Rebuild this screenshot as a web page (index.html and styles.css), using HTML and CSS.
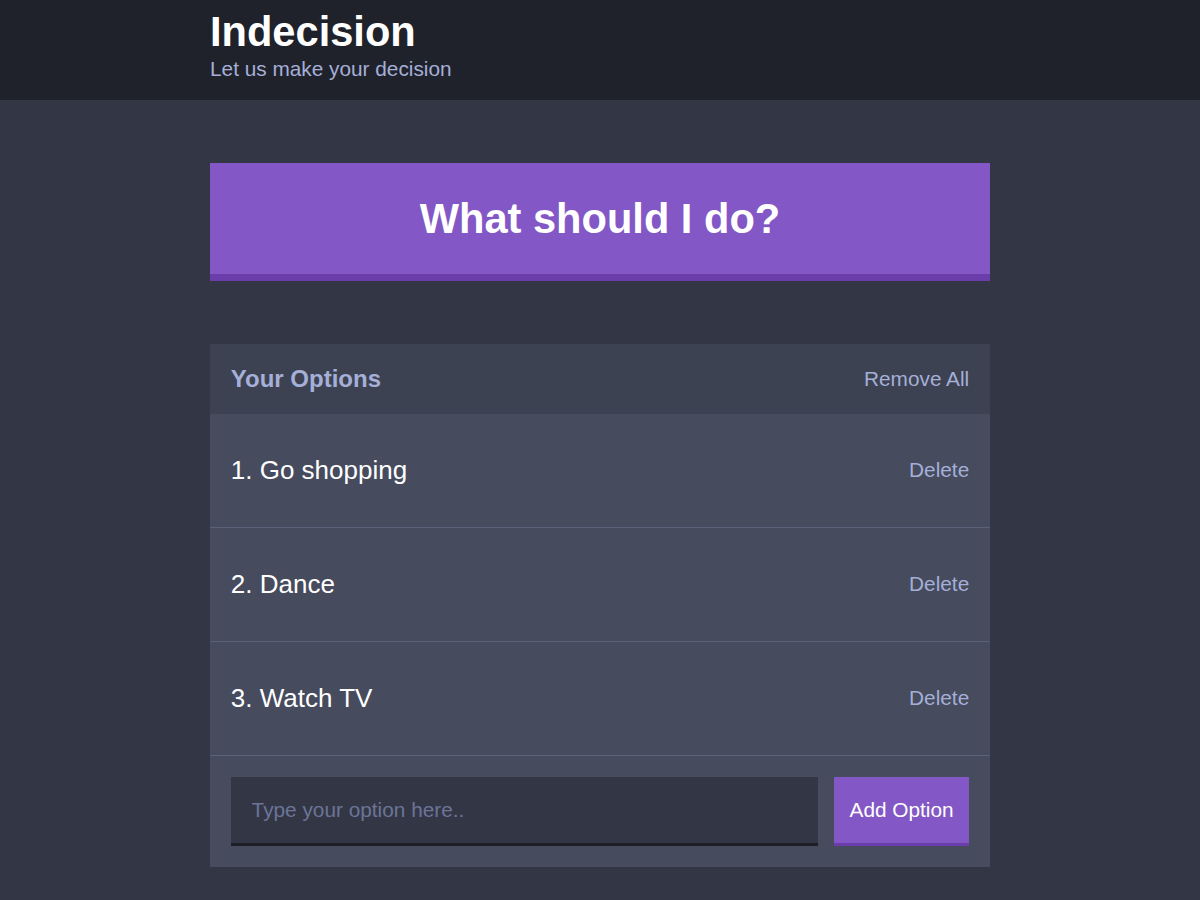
FILE: index.html
```html
<!DOCTYPE html>
<html lang="en">
<head>
<meta charset="utf-8">
<title>Indecision</title>
<link rel="stylesheet" href="styles.css">
</head>
<body>
<header class="header">
  <div class="container">
    <h1 class="header__title">Indecision</h1>
    <h2 class="header__subtitle">Let us make your decision</h2>
  </div>
</header>
<main class="container main">
  <button class="big-button">What should I do?</button>
  <section class="widget">
    <div class="widget-header">
      <h3 class="widget-header__title">Your Options</h3>
      <button class="button--link">Remove All</button>
    </div>
    <div class="option">
      <p class="option__text">1. Go shopping</p>
      <button class="button--link">Delete</button>
    </div>
    <div class="option">
      <p class="option__text">2. Dance</p>
      <button class="button--link">Delete</button>
    </div>
    <div class="option">
      <p class="option__text">3. Watch TV</p>
      <button class="button--link">Delete</button>
    </div>
    <form class="add-option">
      <input class="add-option__input" type="text" placeholder="Type your option here..">
      <button class="button" type="button">Add Option</button>
    </form>
  </section>
</main>
</body>
</html>
```

FILE: styles.css
```css
* { box-sizing: border-box; }

html, body {
  margin: 0;
  padding: 0;
}

body {
  background: #333745;
  font-family: "Liberation Sans", Arial, Helvetica, sans-serif;
  color: #ffffff;
  min-height: 900px;
}

.container {
  width: 780px;
  margin: 0 auto;
}

.header {
  background: #20222b;
  height: 100px;
  padding-top: 9px;
}

.header__title {
  margin: 0;
  font-size: 41.6px;
  line-height: 46px;
  font-weight: 700;
  color: #ffffff;
}

.header__subtitle {
  margin: 2px 0 0;
  font-size: 20.8px;
  line-height: 24px;
  font-weight: 400;
  color: #a5afd7;
}

.main {
  padding-top: 63.4px;
}

.big-button {
  display: block;
  width: 100%;
  background: #8357c5;
  border: none;
  border-bottom: 7.8px solid #6a3dab;
  color: #ffffff;
  font-family: inherit;
  font-size: 41.6px;
  font-weight: 700;
  line-height: 48.5px;
  padding: 31.2px 0;
  margin: 0 0 62.6px;
  cursor: pointer;
}

.widget {
  background: #464b5e;
}

.widget-header {
  background: #3c4251;
  height: 70px;
  padding: 0 20.8px;
  display: flex;
  align-items: center;
  justify-content: space-between;
}

.widget-header__title {
  margin: 0;
  font-size: 24px;
  font-weight: 700;
  color: #a5afd7;
  line-height: 28px;
}

.button--link {
  background: none;
  border: none;
  padding: 0;
  font-family: inherit;
  font-size: 20.8px;
  color: #a5afd7;
  cursor: pointer;
}

.option {
  display: flex;
  align-items: center;
  justify-content: space-between;
  height: 114px;
  padding: 0 20.8px;
  border-bottom: 1px solid #5b6178;
}

.option__text {
  margin: 0;
  font-size: 26px;
  color: #ffffff;
}

.add-option {
  display: flex;
  padding: 21.5px 20.8px 20.5px;
  margin: 0;
}

.add-option__input {
  flex-grow: 1;
  height: 69px;
  background: #333745;
  border: none;
  border-bottom: 3.9px solid #1d1f27;
  color: #a5afd7;
  font-family: inherit;
  font-size: 20.8px;
  padding: 0 20.8px;
  margin: 0 15.6px 0 0;
  outline: none;
}

.add-option__input::placeholder {
  color: #6c7497;
  opacity: 1;
}

.button {
  background: #8357c5;
  border: none;
  border-bottom: 3.9px solid #6a3dab;
  color: #ffffff;
  font-family: inherit;
  font-size: 20.8px;
  font-weight: 500;
  padding: 0 15.6px;
  height: 69px;
  cursor: pointer;
}
```
